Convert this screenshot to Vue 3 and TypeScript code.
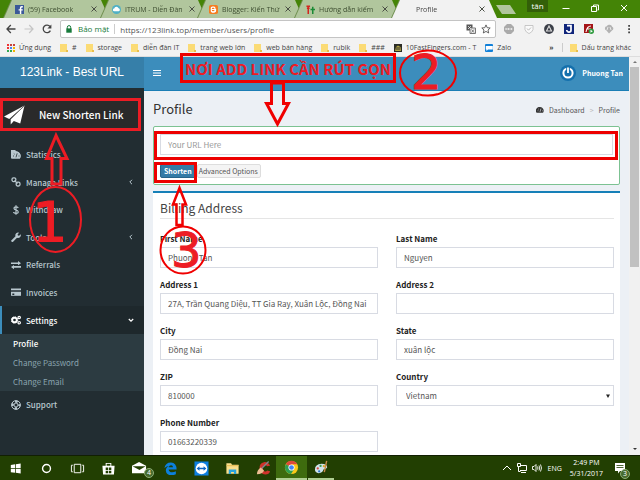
<script setup lang="ts">
import { reactive, ref } from 'vue'

interface Bookmark {
  label: string
  icon: 'folder' | 'tenfast' | 'zalo'
}

const tabs = ['(59) Facebook', 'ITRUM - Diễn Đàn', 'Blogger: Kiến Thứ', 'Hướng dẫn kiếm', 'Profile']

const bookmarks: Bookmark[] = [
  { label: '#', icon: 'folder' },
  { label: 'storage', icon: 'folder' },
  { label: 'diễn đàn IT', icon: 'folder' },
  { label: 'trang web lớn', icon: 'folder' },
  { label: 'web bán hàng', icon: 'folder' },
  { label: 'rubik', icon: 'folder' },
  { label: '###', icon: 'folder' },
  { label: '10FastFingers.com - T', icon: 'tenfast' },
  { label: 'Zalo', icon: 'zalo' },
]

const menu = [
  { label: 'Statistics', icon: 'gauge', more: false },
  { label: 'Manage Links', icon: 'link', more: true },
  { label: 'Withdraw', icon: 'dollar', more: false },
  { label: 'Tools', icon: 'wrench', more: true },
  { label: 'Referrals', icon: 'exchange', more: false },
  { label: 'Invoices', icon: 'card', more: false },
]

const address = ref('https://123link.top/member/users/profile')
const url = ref('')

const fields = reactive([
  { id: 'first', label: 'First Name', value: 'Phuong Tan' },
  { id: 'last', label: 'Last Name', value: 'Nguyen' },
  { id: 'address1', label: 'Address 1', value: '27A, Trần Quang Diệu, TT Gia Ray, Xuân Lộc, Đồng Nai' },
  { id: 'address2', label: 'Address 2', value: '' },
  { id: 'city', label: 'City', value: 'Đồng Nai' },
  { id: 'state', label: 'State', value: 'xuân lộc' },
  { id: 'zip', label: 'ZIP', value: '810000' },
  { id: 'country', label: 'Country', value: 'Vietnam' },
  { id: 'phone', label: 'Phone Number', value: '01663220339' },
])
</script>

<template>
  <div class="desktop">
    <header class="chrome">
      <div class="tabstrip">
        <div v-for="(tab, i) in tabs" :key="tab" class="tab-wrap">
          <div class="tab" :class="{ active: i === 4 }">
            <svg v-if="i === 0" class="fav" viewBox="0 0 10 10"><rect width="10" height="10" fill="#3b5998" /><path d="M7 10V6h1.6V4.600H7V3.500q0-.8.800-.8h.900V1.200H7.300Q5.400 1.200 5.400 3.200v1.400H4V6h1.400v4z" fill="#fff" /></svg>
            <svg v-else-if="i === 1" class="fav" viewBox="0 0 10 10"><circle cx="5" cy="5" r="5" fill="#4fb0c6" /><path d="M2.500 7a1.500 1.500 0 010-3 2.500 2.500 0 014.800-.3A1.700 1.700 0 017.500 7z" fill="#fff" /></svg>
            <svg v-else-if="i === 2" class="fav" viewBox="0 0 10 10"><rect width="10" height="10" rx="2" fill="#f57c20" /><rect x="2.600" y="2.300" width="4" height="5.400" rx="1.200" fill="none" stroke="#fff" stroke-width="1.300" /><path d="M3 5h4.300v1.500q0 1.200-1.200 1.200H3" fill="none" stroke="#fff" stroke-width="1.200" /></svg>
            <svg v-else-if="i === 3" class="fav" viewBox="0 0 10 10"><path d="M2.500 1v9M.5 1.500h4M1 3.500h3" stroke="#d3261f" stroke-width="1.700" /><path d="M7.500 2v8M5 5h5" stroke="#1b8a35" stroke-width="1.700" /></svg>
            <span class="tab-title">{{ tab }}</span>
            <button class="tab-close" aria-label="Close tab"><svg viewBox="0 0 6 6"><path d="M.5.5l5 5M5.500.5l-5 5" stroke="#4a4f45" stroke-width="1" /></svg></button>
          </div>
        </div>
        <button class="new-tab" aria-label="New tab"></button>
        <div class="window-controls">
          <span class="user">tân</span>
          <button aria-label="Minimize"><svg viewBox="0 0 8 8"><path d="M.5 4.500h7" stroke="#fff" /></svg></button>
          <button aria-label="Restore"><svg viewBox="0 0 8 8"><path d="M2.500 2V1h5v5h-1M.5 2.500h5v5h-5z" fill="none" stroke="#fff" /></svg></button>
          <button aria-label="Close"><svg viewBox="0 0 8 8"><path d="M1 1l6 6M7 1L1 7" stroke="#fff" /></svg></button>
        </div>
      </div>

      <div class="toolbar">
        <button aria-label="Back"><svg viewBox="0 0 10 10"><path d="M9.500 5H1M4.800 1L1 5l3.800 4" fill="none" stroke="#444" stroke-width="1.300" /></svg></button>
        <button aria-label="Forward"><svg viewBox="0 0 10 10"><path d="M.5 5H9M5.200 1L9 5 5.200 9" fill="none" stroke="#c5c5c5" stroke-width="1.200" /></svg></button>
        <button aria-label="Reload"><svg viewBox="0 0 10 10"><path d="M8.400 6.600A3.800 3.800 0 118 2.500" fill="none" stroke="#444" stroke-width="1.300" /><path d="M9.400.5v4h-4z" fill="#444" /></svg></button>
        <label class="omnibox">
          <svg class="lock" viewBox="0 0 8 8"><path d="M2.300 4V2.300a1.700 1.700 0 013.400 0V4" fill="none" stroke="#177a3b" /><rect x="1.300" y="3.400" width="5.400" height="4.300" fill="#177a3b" /></svg>
          <span class="secure">Bảo mật</span>
          <input v-model="address" type="text" aria-label="Address" />
          <svg class="small" viewBox="0 0 10 10"><rect x=".5" y=".5" width="6" height="6" fill="#555" /><path d="M4 4h5.500v5.500H4z" fill="#eee" stroke="#777" /><path d="M2 2l3 3M5 2L2 5" stroke="#eee" stroke-width=".8" /><path d="M5.500 5.500l2.500 3m0-3l-2.500 3" stroke="#666" stroke-width=".8" /></svg>
          <svg class="small" viewBox="0 0 10 10"><path d="M5 .9l1.200 2.800 3 .3L7 6l.7 3L5 7.400 2.300 9 3 6 .8 4l3-.3z" fill="none" stroke="#555" stroke-width=".9" /></svg>
        </label>
        <div class="extensions">
          <svg viewBox="0 0 10 10"><path d="M3 0h4l3 3v4l-3 3H3L0 7V3z" fill="#aaa" /><path d="M1.500 5h7M2 4v2M4.500 4v2M7.500 4v2" stroke="#eee" stroke-width=".8" /></svg>
          <svg viewBox="0 0 10 10"><path d="M1 1.500h8v4Q8.500 8 5 9.600 1.500 8 1 5.500z" fill="#fafafa" stroke="#bbb" stroke-width=".8" /><path d="M3 4.500l1.500 1.700L7 3.500" fill="none" stroke="#bbb" /></svg>
          <svg viewBox="0 0 10 10"><circle cx="5" cy="5" r="4.900" fill="#3b3f48" /><path d="M5 2l2.500 5h-5z" fill="none" stroke="#ddd" stroke-width="1.100" /></svg>
          <svg viewBox="0 0 10 10"><rect width="10" height="10" fill="#10257b" /><path d="M3 1.700h4v4.600q0 1.800-2 1.800T2.700 6" fill="none" stroke="#fff" stroke-width="1.700" /></svg>
          <svg viewBox="0 0 10 10"><rect width="9" height="9" fill="#a51417" /><path d="M2 8q1-6 5-6M2.500 5H7" stroke="#fff" fill="none" stroke-width="1.100" /><circle cx="7.300" cy="7.200" r="2.700" fill="#2f9b3f" /><path d="M6.500 5.700v3l2.300-1.500z" fill="#fff" /></svg>
          <svg viewBox="0 0 10 10"><path d="M2.500 6.500a2.200 2.200 0 01.3-4.300 3 3 0 015.400.6A2 2 0 018 6.500L5 9.500z" fill="#b2b2b2" /><path d="M4 3l-1 3M6 3l1 3" stroke="#e7e7e7" /></svg>
          <button aria-label="Menu"><svg viewBox="0 0 10 10"><path d="M4.200 1h1.800v1.800H4.200zM4.200 4.200h1.800V6H4.200zM4.200 7.400h1.800v1.800H4.200z" fill="#444" /></svg></button>
        </div>
      </div>

      <nav class="bookmarks">
        <a href="#apps" class="bm"><svg viewBox="0 0 8 8"><path d="M0 0h2v2H0zM0 3h2v2H0z" fill="#e33" /><path d="M3 0h2v2H3zM6 0h2v2H6z" fill="#c8443b" /><path d="M3 3h2v2H3z" fill="#4285f4" /><path d="M6 3h2v2H6zM6 6h2v2H6z" fill="#f0b400" /><path d="M0 6h2v2H0zM3 6h2v2H3z" fill="#34a853" /></svg>Ứng dụng</a>
        <a v-for="b in bookmarks" :key="b.label" href="#bookmark" class="bm" :class="b.icon">
          <svg v-if="b.icon === 'folder'" viewBox="0 0 8 8"><path d="M0 0h7v6.500L8 8H0z" fill="#fbdb75" /><path d="M6 6h2v2H6z" fill="#e9bd4b" /></svg>
          <svg v-else-if="b.icon === 'tenfast'" viewBox="0 0 8 8"><rect width="8" height="8" fill="#2b2c25" /><path d="M1 7l1-4 2-1.500L6.500 3 7 7z" fill="#b2a543" /><path d="M3 3v3M5 3v3" stroke="#333" /></svg>
          <svg v-else viewBox="0 0 8 8"><rect width="8" height="8" rx="1" fill="#1180d8" /><path d="M.8 2h7v3.500H3L1.500 7V5.500H.8z" fill="#fff" /></svg>
          <span>{{ b.label }}</span>
        </a>
        <button class="overflow">»</button>
        <a href="#other" class="bm other"><svg viewBox="0 0 8 8"><path d="M0 0h7v6.500L8 8H0z" fill="#fbdb75" /><path d="M6 6h2v2H6z" fill="#e9bd4b" /></svg>Dấu trang khác</a>
      </nav>
    </header>

    <div class="page">
      <aside class="sidebar">
        <a href="#home" class="brand">123Link - Best URL</a>
        <a href="#new" class="new-link">
          <svg viewBox="0 0 22 20"><path d="M21.500 0L0 11.500l5.500 2.600z" fill="#fff" /><path d="M21.500 0L7 14.500V20l3.300-3.700L17 19z" fill="#fff" /><path d="M21 .7L6.700 14.300" stroke="#555" stroke-width=".8" /></svg>
          <span>New Shorten Link</span>
        </a>
        <nav class="menu">
          <a v-for="m in menu" :key="m.label" href="#menu">
            <svg viewBox="0 0 10 10">
              <template v-if="m.icon === 'gauge'"><path d="M1 8.500A4.900 4.900 0 115 1.200 4.900 4.900 0 019 8.500z" fill="currentColor" /><path d="M1.200 8.500A4.700 4.700 0 015 1.200a4.700 4.700 0 013.800 7.300z" fill="currentColor" /><path d="M2 6h1M2.800 3.500l.8.700M7.500 6h1M5 7.300l1.200-4" stroke="#222d32" stroke-width=".8" /></template>
              <g v-else-if="m.icon === 'link'" fill="none" stroke="currentColor" stroke-width="1.300"><rect x="1" y=".8" width="3.800" height="3.800" rx="1.500" /><rect x="5.200" y="5.200" width="3.800" height="3.800" rx="1.500" /><path d="M3.500 3.500l3 3" /></g>
              <path v-else-if="m.icon === 'dollar'" d="M7.300 3Q6.500 1.800 5 1.800 3 1.800 3 3.300T5 5t2.200 1.800T5 8.300 2.600 7M5 .3v9.400" fill="none" stroke="currentColor" stroke-width="1.200" />
              <path v-else-if="m.icon === 'wrench'" d="M.5 8.200l4-4A2.700 2.700 0 018.200.8L6.600 2.300l.3 1.200 1.200.2L9.700 2.200A2.800 2.800 0 016 5.700l-3.900 4Q1 10.300.4 9.500T.5 8.200z" fill="currentColor" />
              <path v-else-if="m.icon === 'exchange'" d="M0 2.400h7V1l3 2.200-3 2.100V4H0zM10 6H3V4.900L0 7l3 2.200V7.800h7z" fill="currentColor" />
              <template v-else><path d="M0 1.500h10v7.300H0z" fill="currentColor" /><path d="M0 4h10M1.300 7.200h2" stroke="#222d32" stroke-width="1.400" /></template>
            </svg>
            <span>{{ m.label }}</span>
            <svg v-if="m.more" class="caret" viewBox="0 0 6 6"><path d="M4 .8L1.800 3 4 5.200" fill="none" stroke="currentColor" /></svg>
          </a>
        </nav>
        <a href="#settings" class="settings">
          <svg viewBox="0 0 10 10"><circle cx="3.500" cy="5" r="2.300" fill="none" stroke="currentColor" stroke-width="1.900" /><circle cx="3.500" cy="5" r="3.200" fill="none" stroke="currentColor" stroke-dasharray="1.300 1.200" /><circle cx="8.200" cy="2.500" r="1.200" fill="none" stroke="currentColor" stroke-width="1.200" /><circle cx="8.200" cy="7.700" r="1.200" fill="none" stroke="currentColor" stroke-width="1.200" /></svg>
          <span>Settings</span>
          <svg class="caret" viewBox="0 0 6 6"><path d="M.8 2L3 4.200 5.200 2" fill="none" stroke="currentColor" stroke-width="1.200" /></svg>
        </a>
        <nav class="submenu">
          <a href="#profile" class="current">Profile</a>
          <a href="#password">Change Password</a>
          <a href="#email">Change Email</a>
        </nav>
        <nav class="menu support">
          <a href="#support">
            <svg viewBox="0 0 10 10"><circle cx="5" cy="5" r="4.400" fill="none" stroke="currentColor" /><circle cx="5" cy="5" r="2" fill="none" stroke="currentColor" /><circle cx="5" cy="5" r="3.300" fill="none" stroke="currentColor" stroke-width="2.200" stroke-dasharray="2.600 2.580" stroke-dashoffset="1.300" /></svg>
            <span>Support</span>
          </a>
        </nav>
      </aside>

      <main class="main">
        <div class="navbar">
          <button class="burger" aria-label="Toggle navigation"><svg viewBox="0 0 8 8"><path d="M0 1.500h8M0 4h8M0 6.500h8" stroke="#fff" stroke-width="1.200" /></svg></button>
          <a href="#me" class="account">
            <svg viewBox="0 0 16 16"><circle cx="8" cy="8" r="8" fill="#1470ad" /><circle cx="8" cy="8" r="4.600" fill="none" stroke="#fff" stroke-width="2" /><path d="M8 2v6" stroke="#1470ad" stroke-width="3.600" /><path d="M8 2.500v5.500" stroke="#fff" stroke-width="1.800" /></svg>
            Phuong Tan
          </a>
        </div>
        <div class="title-row">
          <h1>Profile</h1>
          <nav class="crumbs">
            <svg viewBox="0 0 10 10"><path d="M1.200 8.500A4.700 4.700 0 015 1.200a4.700 4.700 0 013.800 7.300z" fill="#333" /><path d="M.8 8.500A4.600 4.600 0 015 1.200z" fill="#333" /><path d="M2 6h1M2.800 3.500l.8.700M7.500 6h1M5 7.300l1.200-4" stroke="#eceff5" stroke-width=".8" /></svg>
            <a href="#dashboard">Dashboard</a><span class="sep">&gt;</span><span>Profile</span>
          </nav>
        </div>
        <form class="shorten" @submit.prevent>
          <input v-model="url" type="text" placeholder="Your URL Here" aria-label="Your URL Here" />
          <div class="actions">
            <button type="submit" class="primary">Shorten</button>
            <button type="button" class="plain">Advanced Options</button>
          </div>
        </form>
        <section class="billing">
          <h2>Billing Address</h2>
          <form class="fields" @submit.prevent>
            <div v-for="f in fields" :key="f.id" class="field">
              <label :for="f.id">{{ f.label }}</label>
              <div v-if="f.id === 'country'" class="select-wrap">
                <select :id="f.id" v-model="f.value"><option>Vietnam</option></select>
                <svg viewBox="0 0 4 4"><path d="M0 .5h4L2 4z" fill="#222" /></svg>
              </div>
              <input v-else :id="f.id" v-model="f.value" type="text" />
            </div>
          </form>
        </section>
      </main>

      <div class="scrollbar">
        <svg viewBox="0 0 4 4"><path d="M0 3h4L2 1z" fill="#777" /></svg>
        <div class="track"><div class="thumb"></div></div>
        <svg viewBox="0 0 4 4"><path d="M0 1h4L2 3z" fill="#333" /></svg>
      </div>
    </div>

    <footer class="taskbar">
      <button aria-label="Start"><svg viewBox="0 0 16 16"><path d="M3 4.200l4.500-.7v4H3zM8.300 3.400L13.500 2.700v4.800H8.300zM3 8.300h4.500v4.200L3 11.900zM8.300 8.300h5.200v5l-5.200-.8z" fill="#fff" /></svg></button>
      <button aria-label="Search"><svg viewBox="0 0 16 16"><circle cx="8" cy="8" r="4.200" fill="none" stroke="#fff" stroke-width="1.500" /></svg></button>
      <button aria-label="Task view"><svg viewBox="0 0 16 16"><path d="M4.500 3.500h7v9h-7zM3 4.500H1.500v7H3M13 4.500h1.500v7H13" fill="none" stroke="#fff" /></svg></button>
      <button aria-label="Store"><svg viewBox="0 0 16 16"><path d="M1.500 5h13l-.7 9.500H2.200zM5 5V2h6v3" fill="#fff" /><path d="M6 5V3h4v2" fill="#223f02" /><path d="M5 7h2.600v2.600H5zM8.400 7H11v2.600H8.400zM5 10.400h2.600V13H5zM8.400 10.400H11V13H8.400z" fill="#223f02" /></svg></button>
      <button class="badged" aria-label="Mail"><svg viewBox="0 0 16 16"><path d="M0 5l7.500-4L15 5v8H0z" fill="#fff" /><path d="M.5 5.500h14L8 9.500z" fill="#223f02" /></svg><span class="badge">4</span></button>
      <button aria-label="Edge"><svg viewBox="0 0 16 16"><path d="M1.500 7.500Q2.500 1.500 8.500 1.500 14.500 2 14.500 9H6Q6.500 12 9.700 12q2.200 0 4-1v3q-2 1-4.700 1-5.500 0-6-5Q3 6.500 6.500 5.300 4 5.300 1.500 7.500zM6 6.600h4.700Q10.500 4.500 8.600 4.500T6 6.600z" fill="#0c80dc" /></svg></button>
      <button aria-label="TeamViewer"><svg viewBox="0 0 16 16"><rect x=".5" y=".5" width="15" height="15" fill="#0e7fe0" /><circle cx="8" cy="8" r="6.200" fill="#fff" /><path d="M2.800 8l3-2.400v1.600h4.400V5.600l3 2.400-3 2.400V8.800H5.800v1.600z" fill="#0e65c4" /></svg></button>
      <button aria-label="File Explorer"><svg viewBox="0 0 16 16"><path d="M1.500 2.500h5l1 1.500h7v9.500h-13z" fill="#fae08d" /><path d="M1.500 5h13" stroke="#e4b94b" /><path d="M4 13.800V9h8v4.800H9.500v-2h-3v2z" fill="#2aa4dc" /></svg></button>
      <button aria-label="CCleaner"><svg viewBox="0 0 16 16"><path d="M15 5Q13 .8 8.500 1.200 3.500 2 3.800 8t6.200 6.500q4 0 5-3.500l-3.200-.8q-.8 1.500-2.500 1Q7 10.500 7.300 7.500T10 4.500q1.300 0 1.800 1.200z" fill="#d0322b" /><path d="M13.500.5L6 8" stroke="#7d8992" stroke-width="1.300" /><path d="M5 7l3.500 3Q7 14 1 14q0-4 4-7z" fill="#edbd93" /></svg></button>
      <button class="focused" aria-label="Chrome"><svg viewBox="0 0 16 16"><circle cx="8" cy="8" r="7" fill="#fbca19" /><path d="M8 8L2 4.400A7 7 0 0114.200 4.600H8z" fill="#df4a3a" /><path d="M8 8L2 4.400A7 7 0 007.500 15l3-5z" fill="#2f9e4f" /><circle cx="8" cy="8" r="3.300" fill="#fff" /><circle cx="8" cy="8" r="2.500" fill="#4286f4" /></svg></button>
      <button class="running" aria-label="Paint"><svg viewBox="0 0 16 16"><path d="M1 10Q1 4.500 8 4q6 0 6 4-1 2-4 2-.5 3.500-5 4-4-.5-4-4z" fill="#cfe3ec" /><circle cx="4" cy="9" r="1.200" fill="#d8453a" /><circle cx="7" cy="6.300" r="1.200" fill="#3e9a4b" /><circle cx="10.500" cy="6.600" r="1.200" fill="#e2a322" /><circle cx="5.500" cy="12" r="1.200" fill="#2d75c6" /><path d="M13.500 1l-2.500 12" stroke="#c68848" stroke-width="1.500" /></svg></button>
      <div class="tray">
        <svg viewBox="0 0 10 10"><path d="M1 7l4-4 4 4" fill="none" stroke="#fff" /></svg>
        <svg viewBox="0 0 10 10"><path d="M3 2.500h6.500v5H3M4 9.500h5M.5.5h3v3h-3zM1.500 3.500v5h2" fill="none" stroke="#fff" /></svg>
        <svg viewBox="0 0 10 10"><path d="M.5 3.500h1.500L4 1.500v7l-2-2H.5zM5.500 3.500q1 1.500 0 3M7 2.500q1.500 2.500 0 5M8.500 1.500q2 3.500 0 7" fill="none" stroke="#fff" stroke-width=".9" /></svg>
        <span class="lang">ENG</span>
        <div class="clock"><span>2:49 PM</span><span>5/31/2017</span></div>
        <div class="badged notes"><svg viewBox="0 0 12 12"><path d="M1 1h10v8H6l-2 2.500V9H1z" fill="#fff" /><path d="M2.500 3.500h7M2.500 5.500h7" stroke="#223f02" stroke-width=".8" /></svg><span class="badge">3</span></div>
      </div>
    </footer>

    <div class="marks">
      <div class="frame frame-new"></div>
      <div class="frame frame-url"></div>
      <div class="frame frame-shorten"></div>
      <div class="frame caption">NƠI ADD LINK CẦN RÚT GỌN</div>
      <svg class="ink" viewBox="0 0 640 480" fill="none" stroke="#ed1c24">
        <path d="M271.500 83v20.500h-5L277.500 124l11-20.500h-5V83z" stroke-width="3" stroke="#f00000" />
        <path d="M179.500 188l-6.500 16.500h3.500V225h6v-20.500h3.500z" stroke-width="2.500" stroke="#f00000" />
        <path d="M56 135.500L46.500 158.500h5.500V184h9v-25.500h6z" stroke-width="3" />
        <ellipse cx="55.500" cy="219.500" rx="25.500" ry="32.500" stroke-width="2" />
        <ellipse cx="428" cy="73" rx="28" ry="22.500" stroke-width="2" stroke="#f00000" />
        <ellipse cx="183" cy="250" rx="22.500" ry="23.500" stroke-width="2" stroke="#f00000" />
      </svg>
      <span class="digit one">1</span>
      <span class="digit two">2</span>
      <span class="digit three">3</span>
    </div>
  </div>
</template>

<style>
body {
  overflow: hidden;
}
</style>

<style scoped>
.desktop {
  position: relative;
  display: flex;
  flex-direction: column;
  height: 100vh;
  overflow: hidden;
  font-family: "Noto Sans CJK SC", "Noto Sans", sans-serif;
}
.desktop * {
  box-sizing: border-box;
}
button {
  padding: 0;
  border: 0;
  background: none;
  font: inherit;
  color: inherit;
}
a {
  color: inherit;
  text-decoration: none;
}
svg {
  display: block;
  flex: none;
}
.chrome {
  flex: none;
  background: #f2f2f2;
  font-family: "Open Sans", "Noto Sans", sans-serif;
  font-size: 7px;
  color: #444;
}
.tabstrip {
  display: flex;
  height: 18px;
  padding-left: 4px;
  background: #448406;
}
.tab-wrap {
  flex: 0 1 105px;
  min-width: 0;
  filter: drop-shadow(-1px 0 0 #6d8d4d);
}
.tab-wrap + .tab-wrap {
  margin-left: -8px;
}
.tab {
  display: flex;
  align-items: center;
  height: 18px;
  padding: 0 12px 0 11px;
  background: #b1c69d;
  clip-path: polygon(8px 0, calc(100% - 8px) 0, 100% 100%, 0 100%);
  color: #3d4d30;
}
.tab.active {
  padding-left: 24px;
  background: #f2f2f2;
  color: #444;
}
.fav {
  width: 9px;
  height: 9px;
  margin-right: 4px;
}
.tab-title {
  flex: 1;
  white-space: nowrap;
}
.tab-close {
  margin-left: 6px;
}
.tab-close svg {
  width: 6px;
  height: 6px;
}
.new-tab {
  width: 20px;
  height: 9px;
  margin: 5px 0 0 -1px;
  background: #b1c69d;
  clip-path: polygon(0 0, 14px 0, 100% 100%, 6px 100%);
}
.window-controls {
  display: flex;
  gap: 21px;
  margin-left: auto;
  padding-right: 12px;
}
.window-controls svg {
  width: 8px;
  height: 8px;
}
.window-controls button {
  height: 16px;
}
.user {
  width: 21px;
  height: 12px;
  margin-right: -7px;
  background: #335f08;
  color: #fff;
  font-size: 8px;
  line-height: 11px;
  text-align: center;
}
.toolbar {
  display: flex;
  align-items: center;
  height: 22px;
  padding: 0 6px;
  gap: 8px;
}
.toolbar svg {
  width: 10px;
  height: 10px;
}
.omnibox {
  display: flex;
  flex: 1;
  align-items: center;
  gap: 5px;
  height: 18px;
  padding: 0 4px;
  border: 1px solid #c4c4c4;
  border-radius: 2px;
  background: #fff;
  font-size: 8px;
}
.toolbar .lock {
  width: 8px;
  height: 8px;
}
.secure {
  padding-right: 5px;
  border-right: 1px solid #ccc;
  color: #177a3b;
  line-height: 10px;
}
.omnibox input {
  flex: 1;
  min-width: 0;
  padding: 0;
  border: 0;
  outline: 0;
  background: none;
  font: inherit;
  color: #555;
}
.extensions {
  display: flex;
  gap: 10px;
}
.bookmarks {
  display: flex;
  align-items: center;
  height: 17px;
  padding: 0 9px 1px 7px;
  gap: 9px;
  border-bottom: 1px solid #ddd;
  white-space: nowrap;
}
.bm {
  display: flex;
  align-items: center;
  gap: 4px;
}
.bm svg {
  width: 8px;
  height: 8px;
}
.overflow {
  margin-left: auto;
  font-weight: bold;
}
.other {
  margin-left: -1px;
  padding-left: 7px;
  border-left: 1px solid #ccc;
}
.page {
  display: flex;
  flex: 1;
  min-height: 0;
  overflow: hidden;
}
.sidebar {
  flex: none;
  width: 144px;
  overflow: hidden;
  background: #222d32;
  color: #b8c7ce;
  font-size: 8px;
}
.brand {
  display: block;
  height: 31px;
  background: #367fa9;
  color: #fff;
  font-family: "Liberation Sans", Arial, sans-serif;
  font-size: 12px;
  line-height: 31px;
  text-align: center;
}
.new-link {
  display: flex;
  align-items: center;
  gap: 14px;
  height: 31px;
  margin: 11px 3px 11px 0;
  padding-left: 4px;
  background: #2a2a2a;
  color: #fff;
  font-size: 10px;
  font-weight: 500;
}
.new-link svg {
  width: 21px;
  height: 20px;
}
.menu {
  display: grid;
  grid-auto-rows: 1fr;
  height: 165px;
}
.menu a,
.settings {
  display: flex;
  align-items: center;
  gap: 5px;
  padding: 0 10px 0 11px;
  font-weight: 500;
}
.menu svg,
.settings svg {
  width: 10px;
  height: 10px;
}
.menu .caret,
.settings .caret {
  width: 6px;
  height: 6px;
  margin-left: auto;
}
.settings {
  height: 28px;
  padding-left: 9px;
  border-left: 2px solid #3c8dbc;
  background: #1e282c;
  color: #fff;
}
.submenu {
  display: flex;
  flex-direction: column;
  padding: 0 13px;
  background: #2c3b41;
  color: #8aa4af;
}
.submenu a {
  height: 19px;
  line-height: 19px;
}
.submenu .current {
  color: #fff;
  font-weight: 500;
}
.menu.support {
  height: 27px;
}
.main {
  flex: 1;
  min-width: 0;
  overflow: hidden;
  background: #ecf0f5;
  color: #333;
  font-size: 8px;
}
.navbar {
  display: flex;
  align-items: center;
  justify-content: space-between;
  height: 34px;
  padding: 0 6px 2px 9px;
  border-bottom: 1px solid #1a7eb5;
  background: #3c8dbc;
  color: #fff;
}
.burger svg {
  width: 8px;
  height: 8px;
}
.account {
  display: flex;
  align-items: center;
  gap: 6px;
  font-size: 7px;
  font-weight: 700;
}
.account svg {
  width: 16px;
  height: 16px;
}
.title-row {
  display: flex;
  align-items: center;
  justify-content: space-between;
  height: 35px;
  padding: 0 9px;
}
h1,
h2 {
  margin: 0;
  font-weight: 400;
}
h1 {
  font-size: 13px;
}
.crumbs {
  display: flex;
  align-items: center;
  gap: 5px;
  padding-top: 3px;
  color: #555;
  font-size: 7px;
}
.crumbs svg {
  width: 8px;
  height: 8px;
}
.sep {
  color: #bbb;
}
.shorten {
  margin: 0 9px 6px;
  padding: 7px 6px 6px;
  border: 1px solid #7cc292;
  border-radius: 2px;
  background: #fff;
}
input,
select {
  display: block;
  width: 100%;
  height: 21px;
  padding: 0 7px;
  border: 1px solid #d8dbe3;
  border-radius: 0;
  outline: 0;
  background: #fff;
  color: #555;
  font-family: inherit;
  font-size: 8px;
}
input::placeholder {
  color: #999;
  opacity: 1;
}
.actions {
  display: flex;
  gap: 1px;
  margin-top: 9px;
}
.actions button {
  height: 14px;
  border: 1px solid #ddd;
  border-radius: 2px;
  background: #f4f4f4;
  color: #555;
  font-size: 7px;
  line-height: 12px;
}
.actions .primary {
  padding: 0 3px;
  border-color: #27658a;
  background: #337ba6;
  color: #fff;
  font-weight: 700;
}
.actions .plain {
  padding: 0 2px 0 1px;
}
.billing {
  height: 100%;
  margin: 0 9px;
  padding: 5px 6px 0 7px;
  border-top: 2px solid #1680b8;
  background: #fff;
}
h2 {
  height: 21px;
  border-bottom: 1px solid #e5e5e5;
  color: #444;
  font-size: 12px;
  line-height: 20px;
}
.fields {
  display: grid;
  grid-template-columns: 1fr 1fr;
  gap: 11px 18px;
  margin-top: 14px;
}
.field label {
  display: block;
  height: 14px;
  line-height: 11px;
  font-weight: 700;
  color: #222;
}
.select-wrap {
  position: relative;
}
select {
  padding: 0 9px;
  appearance: none;
}
.select-wrap svg {
  position: absolute;
  top: 9px;
  right: 4px;
  width: 4px;
  height: 4px;
  pointer-events: none;
}
.scrollbar {
  display: flex;
  flex: none;
  flex-direction: column;
  align-items: center;
  width: 11px;
  padding: 3px 0 4px;
  background: #f1f1f1;
}
.scrollbar svg {
  width: 4px;
  height: 4px;
}
.track {
  flex: 1;
  padding: 3px 0;
}
.thumb {
  width: 9px;
  height: 53%;
  background: #c1c1c1;
}
.taskbar {
  display: flex;
  flex: none;
  height: 25px;
  border-top: 1px solid #111f02;
  background: #223f02;
  color: #fff;
  font-family: "Open Sans", "Noto Sans", sans-serif;
  font-size: 7px;
}
.taskbar > button {
  display: flex;
  align-items: center;
  justify-content: center;
  width: 31px;
}
.taskbar > button svg {
  width: 15px;
  height: 15px;
}
.taskbar .focused,
.taskbar .running {
  border-bottom: 2px solid #b0cf93;
}
.taskbar .focused {
  margin: 0 1px 0 -3px;
  background: #3e6b0e;
}
.taskbar .running {
  width: 26px;
}
.badged {
  position: relative;
}
.badge {
  position: absolute;
  right: 1px;
  bottom: 2px;
  width: 10px;
  height: 10px;
  border: 1px solid #8fae77;
  border-radius: 5px;
  background: #476b2e;
  font-size: 7px;
  line-height: 8px;
  text-align: center;
}
.tray {
  display: flex;
  align-items: center;
  gap: 5px;
  margin-left: auto;
  padding-right: 14px;
}
.tray svg {
  width: 10px;
  height: 10px;
}
.lang {
  margin-left: 1px;
}
.clock {
  display: flex;
  flex-direction: column;
  margin: 0 6px 0 3px;
  line-height: 11px;
  text-align: center;
}
.tray .notes svg {
  width: 12px;
  height: 12px;
}
.notes .badge {
  right: -4px;
  bottom: -5px;
}
.marks {
  position: absolute;
  inset: 0;
  pointer-events: none;
}
.frame {
  position: absolute;
  border: 3px solid #ed0000;
}
.frame-new {
  top: 98px;
  left: 0;
  width: 141px;
  height: 33px;
  border-color: #ed1c24;
}
.frame-url {
  top: 131px;
  left: 154px;
  right: 22px;
  height: 29px;
}
.frame-shorten {
  top: 162px;
  left: 154px;
  width: 43px;
  height: 21px;
}
.caption {
  top: 53px;
  left: 180px;
  width: 216px;
  height: 30px;
  color: #ed1c24;
  font-size: 15px;
  font-weight: 700;
  line-height: 26px;
  text-align: center;
  white-space: nowrap;
}
.ink {
  position: absolute;
  top: 0;
  left: 0;
  width: 640px;
  height: 480px;
}
.digit {
  position: absolute;
  color: #ed1c24;
  font-family: "DejaVu Sans", sans-serif;
  font-size: 48px;
  line-height: 50px;
  -webkit-text-stroke: 1px #ed1c24;
}
.one {
  top: 197px;
  left: 32px;
  font-size: 56px;
}
.two {
  top: 47px;
  left: 411px;
}
.three {
  top: 225px;
  left: 171px;
}
</style>
